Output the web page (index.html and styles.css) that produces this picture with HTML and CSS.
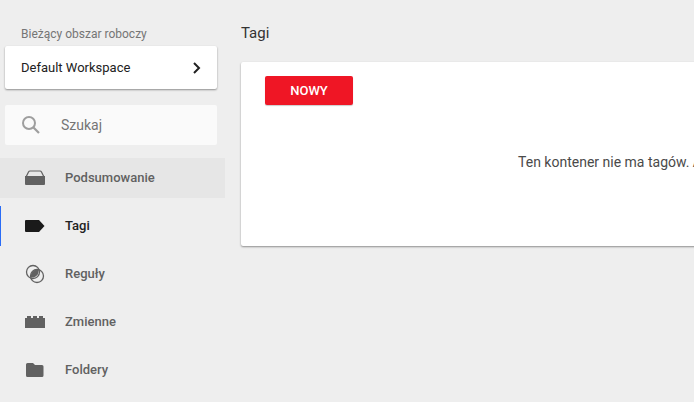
FILE: index.html
```html
<!DOCTYPE html>
<html lang="pl">
  <head>
    <meta charset="UTF-8" />
    <meta name="viewport" content="width=device-width, initial-scale=1.0" />
    <title>Tagi</title>
    <link rel="stylesheet" href="styles.css">
  </head>
  <body>
    <div class="layout">
      <aside class="sidebar">
        <div class="workspace-label">Bieżący obszar roboczy</div>
        <div class="workspace-card">
          <span>Default Workspace</span>
          <svg class="chevron" width="12" height="14" viewBox="0 0 12 14">
            <path d="M3 2 L8 7 L3 12" fill="none" stroke="#212121" stroke-width="2" />
          </svg>
        </div>

        <div class="search">
          <svg width="20" height="20" viewBox="0 0 20 20">
            <circle cx="8" cy="8" r="6" fill="none" stroke="#9e9e9e" stroke-width="2" />
            <path d="M12.5 12.5 L18 18" stroke="#9e9e9e" stroke-width="2.2" />
          </svg>
          <span>Szukaj</span>
        </div>

        <nav class="nav">
          <div class="nav-item hovered">
            <svg width="20" height="16" viewBox="0 0 20 16">
              <path d="M1 7 L3.5 2 Q4 1 5 1 H15 Q16 1 16.500 2 L19 7" fill="none" stroke="#616161" stroke-width="1.2" />
              <path d="M0 6 H20 V14 Q20 15 19 15 H1 Q0 15 0 14 Z" fill="#616161" />
            </svg>
            <span>Podsumowanie</span>
          </div>
          <div class="nav-item active">
            <svg width="20" height="16" viewBox="0 0 20 16">
              <path d="M1 2 H14 L19.500 8 L14 14 H1 Q0 14 0 13 V3 Q0 2 1 2 Z" fill="#1a1a1a" />
            </svg>
            <span>Tagi</span>
          </div>
          <div class="nav-item">
            <svg width="20" height="20" viewBox="0 0 20 20">
              <circle cx="8" cy="8" r="6.500" fill="none" stroke="#616161" stroke-width="1.300" />
              <circle cx="12" cy="12" r="6.500" fill="none" stroke="#616161" stroke-width="1.300" />
              <path d="M13.500 5.700 A6.500 6.500 0 0 1 6 13.500 A6.500 6.500 0 0 1 13.500 5.700 Z" fill="#616161" />
            </svg>
            <span>Reguły</span>
          </div>
          <div class="nav-item">
            <svg width="20" height="14" viewBox="0 0 20 14">
              <path d="M0 3 H2 V1 H6 V3 H8 V1 H12 V3 H14 V1 H18 V3 H20 V13 H0 Z" fill="#616161" />
            </svg>
            <span>Zmienne</span>
          </div>
          <div class="nav-item">
            <svg width="20" height="16" viewBox="0 0 20 16">
              <path d="M2.500 1 H8 L10 3 H17 Q18.500 3 18.500 4.500 V13.500 Q18.500 15 17 15 H2.500 Q1 15 1 13.500 V2.500 Q1 1 2.500 1 Z" fill="#616161" />
            </svg>
            <span>Foldery</span>
          </div>
        </nav>
      </aside>

      <main class="content">
        <h2>Tagi</h2>
        <div class="card">
          <button type="button" class="new-btn">NOWY</button>
          <p class="empty-msg">Ten kontener nie ma tagów. Aby utworzyć nowy tag, kliknij przycisk Nowy.</p>
        </div>
      </main>
    </div>
  </body>
</html>
```

FILE: styles.css
```css
* {
  margin: 0;
  padding: 0;
  box-sizing: border-box;
  font-family: Roboto, "Liberation Sans", sans-serif;
}

html,
body {
  height: 100%;
  overflow: hidden;
}

body {
  background-color: #eeeeee;
}

.layout {
  display: flex;
  height: 100%;
}

.sidebar {
  width: 241px;
  flex-shrink: 0;
  padding-top: 27px;
}

.workspace-label {
  margin-left: 21px;
  margin-bottom: 5px;
  color: #757575;
  font-size: 12px;
  line-height: 14px;
}

.workspace-card {
  display: flex;
  align-items: center;
  justify-content: space-between;
  width: 212px;
  height: 43px;
  margin-left: 5px;
  padding: 0 14px 0 16px;
  background-color: white;
  border-radius: 2px;
  box-shadow: 0 1px 2px rgba(0, 0, 0, 0.4);
  color: #212121;
  font-size: 13px;
}

.search {
  display: flex;
  align-items: center;
  gap: 20px;
  width: 212px;
  height: 40px;
  margin: 16px 0 13px 5px;
  padding-left: 16px;
  background-color: #fafafa;
  border-radius: 2px;
  color: #757575;
  font-size: 14px;
}

.nav {
  display: flex;
  flex-direction: column;
  gap: 8px;
}

.nav-item {
  display: flex;
  align-items: center;
  width: 225px;
  height: 40px;
  padding-left: 25px;
  color: #616161;
  font-size: 13px;
  font-weight: 500;
}

.nav-item svg {
  flex-shrink: 0;
}

.nav-item span {
  margin-left: 20px;
  padding-bottom: 2px;
}

.nav-item.hovered {
  background-color: #e6e6e6;
}

.nav-item.active {
  padding-left: 24px;
  border-left: 1px solid #2a6cf6;
  color: #212121;
}

.content {
  flex-shrink: 0;
}

h2 {
  margin-top: 24px;
  margin-bottom: 19px;
  color: #333333;
  font-size: 15px;
  font-weight: 400;
  line-height: 19px;
}

.card {
  width: 1010px;
  height: 184px;
  padding: 14px 24px;
  background-color: white;
  border-radius: 2px;
  box-shadow: 0 1px 2px rgba(0, 0, 0, 0.4);
}

.new-btn {
  display: block;
  width: 88px;
  height: 29px;
  background-color: #ef1625;
  border: none;
  border-radius: 2px;
  box-shadow: 0 1px 1px rgba(0, 0, 0, 0.2);
  color: white;
  font-size: 13px;
  font-weight: 500;
}

.empty-msg {
  margin-top: 48px;
  color: #4a4a4a;
  font-size: 14px;
  line-height: 18px;
  text-align: center;
}
```
